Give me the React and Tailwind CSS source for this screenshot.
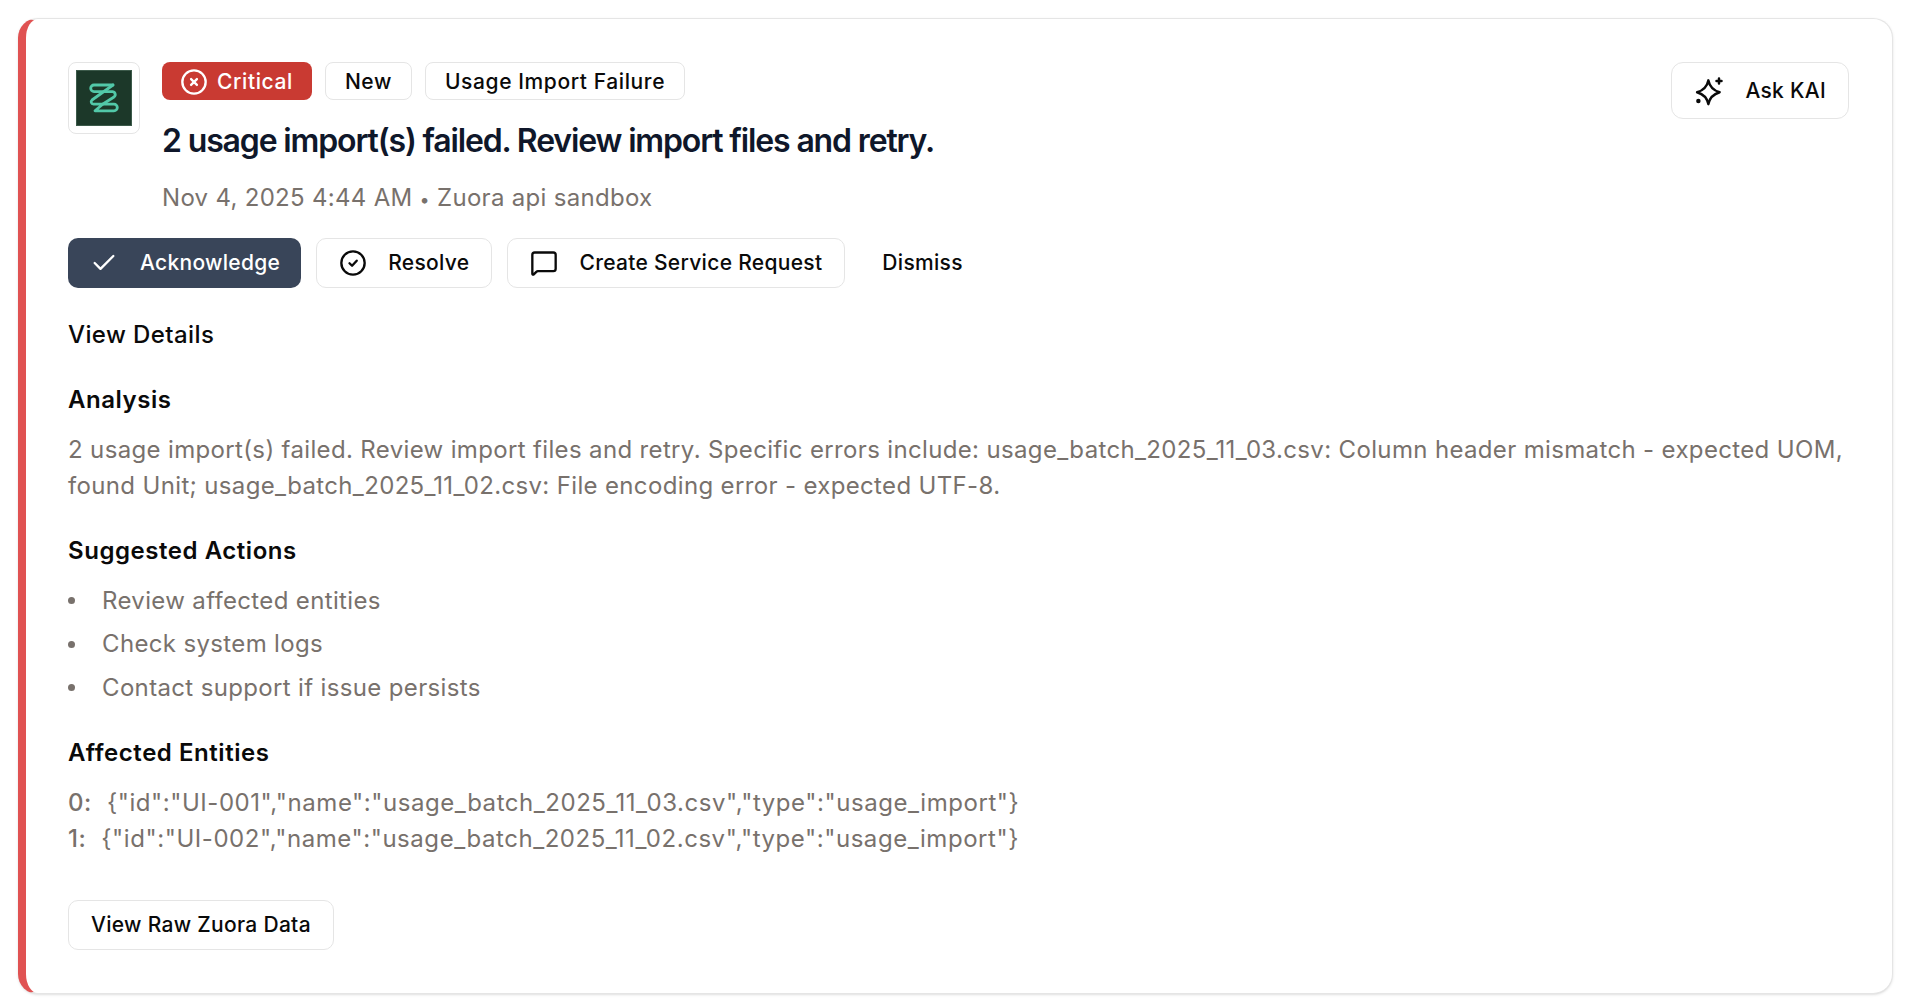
import React from "react";
import { Check, MessageSquare } from "lucide-react";

const outlineBtn = "flex items-center h-[50px] rounded-[10px] border border-[#e5e5e5] bg-white text-[#0a0a0a] text-[21px] font-medium tracking-[0.3px]";
const badge = "flex items-center h-[38px] pt-[1px] px-[19px] rounded-[8px] border border-[#e5e5e5] text-[#0a0a0a] text-[21px] font-medium tracking-[0.6px]";
const heading = "text-[24px] leading-[36px] font-semibold tracking-[0.55px] text-[#0a0a0a]";
const bodyText = "text-[24px] leading-[36px] tracking-[0.35px] text-[#78716c]";

const ZuoraLogo = () => (
    <div className="w-[56px] h-[56px] bg-[#1c3829] border border-[#3c5a4a] flex items-center justify-center">
        <svg width="48" height="48" viewBox="0 0 48 48" fill="none" stroke="#52c8a8" strokeWidth="2.8" strokeLinejoin="round" strokeLinecap="round">
            <path d="M33 11H14a3.300 3.300 0 0 0 0 6.600H32a3 3 0 0 1 2 5.400L23 30" />
            <path d="M33 11 12 26a2.400 2.400 0 0 0 1.500 4.200H34a3.300 3.300 0 0 1 0 6.600H15L23 30" />
        </svg>
    </div>
);

const KaiSparkle = () => (
    <svg width="30" height="30" viewBox="0 0 24 24" fill="none" stroke="currentColor" strokeWidth="2" strokeLinecap="round" strokeLinejoin="round">
        <path d="M11.500 3.500C12.500 8.500 15.500 11.500 20.500 13C15.500 14.500 12.500 17.500 11.500 22.500C10.500 17.500 7.500 14.500 2.500 13C7.500 11.500 10.500 8.500 11.500 3.500Z" />
        <path d="M20 2v4M18 4h4" />
        <circle cx="3.500" cy="20" r="0.800" fill="currentColor" />
    </svg>
);

const SmallCircleIcon = ({ kind, className }) => (
    <svg width="28" height="28" viewBox="0 0 24 24" fill="none" stroke="currentColor" strokeWidth="2" strokeLinecap="round" strokeLinejoin="round" className={className}>
        <circle cx="12" cy="12" r="10" />
        {kind === "x" ? <path d="m14.500 9.500-5 5m0-5 5 5" /> : <path d="m9 12.200 2.200 2.200 4-4.400" />}
    </svg>
);

const Bullet = ({ children }) => (
    <li className="flex items-center gap-[27px]">
        <span className="w-[7px] h-[7px] rounded-full bg-[#78716c]" />
        {children}
    </li>
);

export default function App() {
    return (
        <div className="w-[1918px] h-[1006px] bg-white pt-[18px] pl-[18px] font-['Inter',sans-serif]">
            <div className="w-[1875px] h-[976px] rounded-[20px] border border-[#e5e5e5] border-l-[8px] border-l-[#e05252] bg-white shadow-sm pt-[43px] pl-[42px] pr-[43px]">
                <div className="flex justify-between items-start">
                    <div className="flex gap-[22px]">
                        <div className="w-[72px] h-[72px] rounded-[8px] border border-[#e5e5e5] flex items-center justify-center">
                            <ZuoraLogo />
                        </div>
                        <div className="flex flex-col">
                            <div className="flex gap-[13px]">
                                <span className="flex items-center h-[38px] pt-[1px] pl-[18px] pr-[19px] gap-[9px] rounded-[8px] bg-[#c93a32] text-white text-[21px] font-medium tracking-[0.6px]">
                                    <SmallCircleIcon kind="x" />
                                    Critical
                                </span>
                                <span className={badge}>New</span>
                                <span className={badge}>Usage Import Failure</span>
                            </div>
                            <h1 className="mt-[19px] text-[32px] leading-[44px] font-semibold tracking-[-1.15px] text-[#0f172a]">2 usage import(s) failed. Review import files and retry.</h1>
                            <p className="mt-[17px] text-[24px] leading-[36px] tracking-[0.3px] text-[#78716c]">Nov 4, 2025 4:44 AM <span className="text-[18px]">•</span> Zuora api sandbox</p>
                        </div>
                    </div>
                    <button className="flex items-center h-[57px] pt-[1px] pl-[22px] pr-[22px] gap-[21px] rounded-[12px] border border-[#e5e5e5] text-[#0a0a0a] text-[21px] font-medium tracking-[0.3px]">
                        <KaiSparkle />
                        Ask KAI
                    </button>
                </div>

                <div className="flex items-center gap-[15px] mt-[19.500px]">
                    <button className="flex items-center h-[50px] pl-[22px] pr-[21px] gap-[22px] rounded-[10px] bg-[#394559] text-white text-[21px] font-medium tracking-[0.3px]">
                        <Check size={28} />
                        Acknowledge
                    </button>
                    <button className={`${outlineBtn} px-[22px] gap-[21px]`}>
                        <SmallCircleIcon kind="check" />
                        Resolve
                    </button>
                    <button className={`${outlineBtn} px-[22px] gap-[21px]`}>
                        <MessageSquare size={28} />
                        Create Service Request
                    </button>
                    <span className="ml-[22px] text-[21px] font-medium tracking-[0.3px] text-[#0a0a0a]">Dismiss</span>
                </div>

                <p className="mt-[29px] text-[24px] leading-[36px] font-medium tracking-[0.4px] text-[#0a0a0a]">View Details</p>

                <h2 className={`mt-[29px] ${heading}`}>Analysis</h2>
                <p className={`mt-[14px] ${bodyText}`}>2 usage import(s) failed. Review import files and retry. Specific errors include: usage_batch_2025_11_03.csv: Column header mismatch - expected UOM, found Unit; usage_batch_2025_11_02.csv: File encoding error - expected UTF-8.</p>

                <h2 className={`mt-[29px] ${heading}`}>Suggested Actions</h2>
                <ul className={`mt-[14px] flex flex-col gap-[7.500px] ${bodyText}`}>
                    <Bullet>Review affected entities</Bullet>
                    <Bullet>Check system logs</Bullet>
                    <Bullet>Contact support if issue persists</Bullet>
                </ul>

                <h2 className={`mt-[29px] ${heading}`}>Affected Entities</h2>
                <div className="mt-[14px] text-[24px] leading-[36px] tracking-[0.55px] text-[#78716c]">
                    <div className="flex gap-[15px]"><span className="font-medium">0:</span><span>{'{"id":"UI-001","name":"usage_batch_2025_11_03.csv","type":"usage_import"}'}</span></div>
                    <div className="flex gap-[15px]"><span className="font-medium">1:</span><span>{'{"id":"UI-002","name":"usage_batch_2025_11_02.csv","type":"usage_import"}'}</span></div>
                </div>

                <button className={`${outlineBtn} px-[22px] mt-[43px]`}>View Raw Zuora Data</button>
            </div>
        </div>
    );
}
